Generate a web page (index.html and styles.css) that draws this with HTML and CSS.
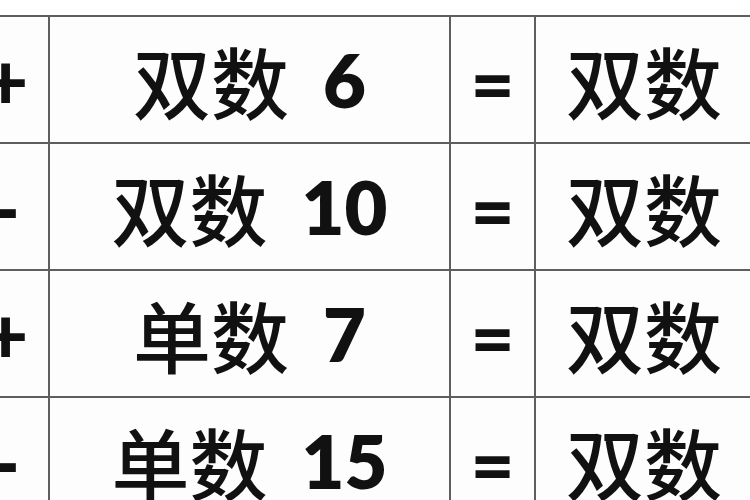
FILE: index.html
```html
<!DOCTYPE html>
<html lang="zh-CN">
<head>
<meta charset="utf-8">
<link rel="stylesheet" href="styles.css">
</head>
<body>
<div class="grid">
  <div class="cell op">+</div>
  <div class="cell main"><span class="cjk">双数</span><span class="num">6</span></div>
  <div class="cell eq">=</div>
  <div class="cell res"><span class="cjk">双数</span></div>

  <div class="cell op">-</div>
  <div class="cell main"><span class="cjk">双数</span><span class="num">10</span></div>
  <div class="cell eq">=</div>
  <div class="cell res"><span class="cjk">双数</span></div>

  <div class="cell op">+</div>
  <div class="cell main"><span class="cjk">单数</span><span class="num">7</span></div>
  <div class="cell eq">=</div>
  <div class="cell res"><span class="cjk">双数</span></div>

  <div class="cell op">-</div>
  <div class="cell main"><span class="cjk">单数</span><span class="num">15</span></div>
  <div class="cell eq">=</div>
  <div class="cell res"><span class="cjk">双数</span></div>
</div>
</body>
</html>
```

FILE: styles.css
```css
html, body {
  margin: 0;
  padding: 0;
  background: #ffffff;
  overflow: hidden;
}

.grid {
  display: grid;
  grid-template-columns: 97px 399px 83px 240px;
  grid-auto-rows: 125px;
  gap: 2px;
  padding: 2px;
  background: #5e5e5e;
  margin-left: -51px;
  margin-top: 15px;
  width: max-content;
}

.cell {
  background: #fdfdfd;
  display: flex;
  align-items: center;
  justify-content: center;
  color: #111111;
  font-family: Lato, "Open Sans", sans-serif;
  font-weight: 900;
  font-size: 74px;
  line-height: 1;
}

.cjk {
  font-family: "Noto Sans CJK SC", sans-serif;
  font-weight: 500;
  font-size: 78px;
  line-height: 1;
}

.num {
  margin-left: 34px;
  font-weight: 800;
}

.op {
  padding-left: 12px;
  font-size: 78px;
}

.eq {
  padding-top: 6px;
  font-size: 76px;
}

.res {
  justify-content: flex-start;
  padding-left: 30px;
}
```
